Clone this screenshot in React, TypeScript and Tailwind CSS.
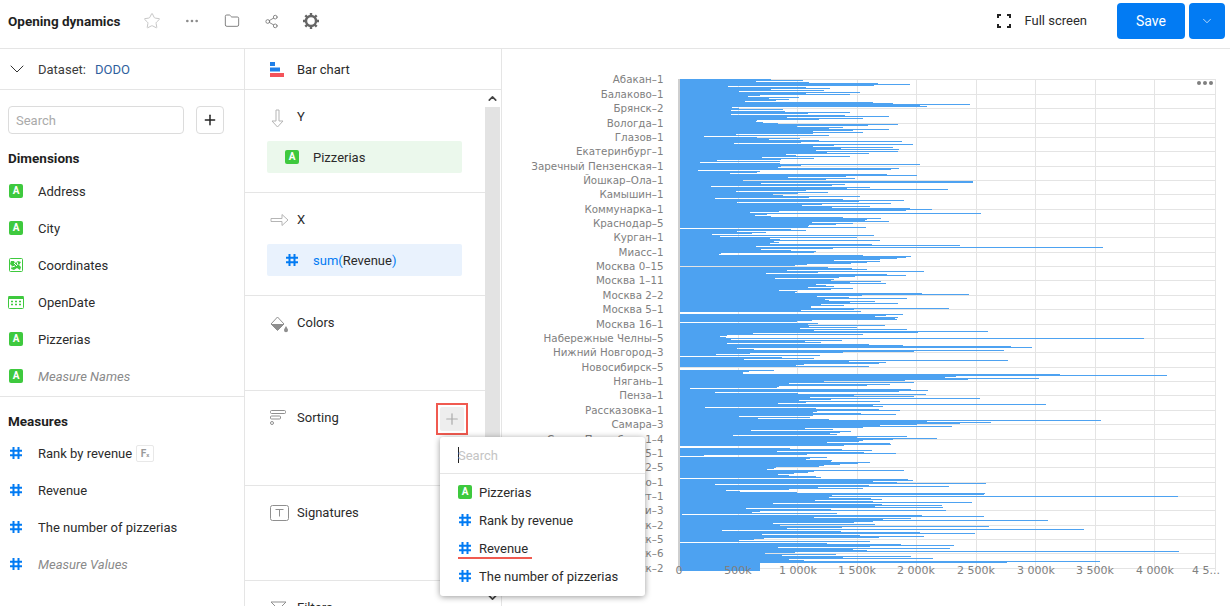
import { ChevronDown, ChevronUp, Ellipsis, Folder, Plus, Share2, Star } from "lucide-react";
import type { ReactNode } from "react";

const font = "font-['Roboto','Liberation_Sans',sans-serif]";

// bar ends read off the reference, one row per pixel
const rowsA = [288,384,243,402,609,705,597,159,393,465,288,447,192,555,393,525,255,219,372,282,342,303,210,594,654,885,735,756,171,192,324,168,330,525,399,168,510,642,336,564,432,246,243,264,309,669,579,366,504,462,642,534,414,564,414,183,462,87,246,375,282,432,681,378,177,714,477,414,654,498,672,423,669,456,582,333,363,525,261,417,318,126,315,75,315,735,378,318,309,672,648,69,255,246,165,636];
const rowsB = [726,513,339,540,453,204,894,894,258,510,471,108,585,516,819,393,183,459,369,294,324,555,402,120,504,687,552,186,648,441,381,585,471,705,771,693,312,225,918,276,240,288,504,618,576,570,642,411,534,483,402,399,573,12,348,393,186,273,231,111,597,135,546,285,315,615,297,312,285,591,855,243,1284,474,258,348,423,417,138,132,564,708,693,666,615,477,615,576,528,396,360,12,459,531,576,336,747,429,273,636];
const rowsC = [693,540,492,300,477,468,618,525,633,423,453,477,399,534,468,312,366,360,741,882,561,426,522,696,450,462,600,525,669,438,507,408,408,822,537,378,558,12,12,684,633,600,669,660,666,411,366,12,429,400,630,402,546,375,696,417,939,729,234,564,156,135,153,1407,168,501,390,438,156,582,684,1008,1071,186,237,987,717,504,225,123,435,12,321,417,207,999,522,633,612,387,363,582,12,12,12,297,222,204,204,1155];
const rowsD = [1476,843,810,1092,879,690,447,717,342,645,576,312,306,45,708,759,672,120,369,753,537,717,405,915,468,372,615,393,309,1113,594,624,90,423,612,675,426,414,558,663,414,192,405,249,462,1278,756,948,855,726,615,831,564,390,474,228,528,495,465,486,174,696,546,786,654,564,552,456,645,648,507,12,12,345,501,591,306,567,663,396,87,12,456,405,393,471,468,585,549,495,447,432,303,297,276,687,417,399,357,309];
const rowsE = [396,468,481,103,712,726,619,683,920,199,609,821,473,593,396,229,266,417,917,913,510,1430,502,614,643,465,618,882,353,643,803,625,805,282,508,813,319,296,524,112,749,913,462,720,646,1084,619,569,353,625,372,928,536,391,1180,218,534,744,890,324,585,755,635,330,303,263,611,103,497,694,834,611,367,824,566,603,1432,412,332,521,377,720,539,779,396,436,1223,975,319,319,319,319,319,319,319,319];

const widths = [
  ...[...rowsA, ...rowsB, ...rowsC, ...rowsD].map((v) => (v - 12) / 3),
  ...rowsE.map((v) => (v - 103) / 2.66),
];

const barPath = widths
  .slice(0, 492)
  .map((w, i) => {
    const px = Math.round(w);
    return `M177 ${30 + i}h${px}v1h-${px}z`;
  })
  .join("");

const cities: [number, string][] = [
  [79, "Абакан–1"], [94, "Балаково–1"], [108, "Брянск–2"], [123, "Вологда–1"], [137, "Глазов–1"],
  [151, "Екатеринбург–1"], [166, "Заречный Пензенская–1"], [180, "Йошкар–Ола–1"], [194, "Камышин–1"],
  [209, "Коммунарка–1"], [223, "Краснодар–5"], [237, "Курган–1"], [252, "Миасс–1"], [266, "Москва 0–15"],
  [280, "Москва 1–11"], [295, "Москва 2–2"], [309, "Москва 5–1"], [324, "Москва 16–1"],
  [338, "Набережные Челны–5"], [352, "Нижний Новгород–3"], [367, "Новосибирск–5"], [381, "Нягань–1"],
  [395, "Пенза–1"], [410, "Рассказовка–1"], [424, "Самара–3"], [439, "Санкт–Петербург 1–4"],
  [453, "Санкт–Петербург 5–1"], [467, "Санкт–Петербург 2–5"], [482, "Сосново–1"], [496, "Сургут–1"],
  [510, "Тольятти–3"], [525, "Хабаровск–2"], [539, "Челябинск–5"], [553, "Южно–Сахалинск–6"], [568, "Якутск–2"],
];

const ticks: [number, string][] = [
  [177, "0"], [236, "500k"], [296, "1 000k"], [355, "1 500k"], [414, "2 000k"],
  [474, "2 500k"], [534, "3 000k"], [593, "3 500k"], [653, "4 000k"],
];

function AttrIcon() {
  return (
    <span className="flex h-[14px] w-[14px] shrink-0 items-center justify-center rounded-[2px] bg-[#3ec93e] text-[10px] font-bold leading-none text-white">
      A
    </span>
  );
}

function HashIcon() {
  return (
    <svg width="14" height="14" viewBox="0 0 14 14" className="shrink-0 text-[#027bf3]" stroke="currentColor" strokeWidth="2">
      <path d="M4.5 1v12M9.5 1v12M1 4.7h12M1 9.3h12" />
    </svg>
  );
}

function GeoIcon() {
  return (
    <svg width="14" height="14" viewBox="0 0 14 14" className="shrink-0 text-[#3ec93e]">
      <rect x="0.5" y="0.5" width="13" height="13" rx="1" fill="none" stroke="currentColor" />
      <path d="M2 3h3l1 2 3-2 3 1-2 3 2 2-1 3-3-2-3 2-3-1 1-3-2-2z" fill="currentColor" />
      <path d="M5 5l3 3M3 9l3-1M8 4l1 3" stroke="#fff" strokeWidth="1" fill="none" />
    </svg>
  );
}

function DateIcon() {
  return (
    <svg width="16" height="14" viewBox="0 0 16 14" className="-ml-px shrink-0 text-[#3ec93e]">
      <rect x="0.5" y="1.5" width="15" height="12" rx="1" fill="none" stroke="currentColor" />
      <rect x="0.5" y="1" width="15" height="3" fill="currentColor" />
      <path d="M3 6.5h2M7 6.5h2M11 6.5h2M3 9.5h2M7 9.5h2M11 9.5h2" stroke="currentColor" strokeWidth="1.4" />
    </svg>
  );
}

function GearIcon() {
  return (
    <svg width="18" height="18" viewBox="0 0 18 18" fill="none" stroke="#666">
      <circle cx="9" cy="9" r="5" strokeWidth="2.4" />
      <path
        d="M9 1v3M9 14v3M1 9h3M14 9h3M3.3 3.3l2.2 2.2M12.5 12.5l2.2 2.2M14.7 3.3l-2.2 2.2M5.5 12.5l-2.2 2.2"
        strokeWidth="2.4"
      />
    </svg>
  );
}

function FieldRow({ icon, label, muted, badge }: { icon: ReactNode; label: string; muted?: boolean; badge?: boolean }) {
  return (
    <div className="flex h-[37px] items-center pl-[9px]">
      <span className="flex w-[29px] items-center">{icon}</span>
      <span className={muted ? "pt-[2px] italic text-[#8a8a8a]" : "pt-[2px] text-[#2b2b2b]"}>{label}</span>
      {badge && (
        <span className="ml-[4px] flex h-[17px] w-[18px] items-center justify-center rounded-[2px] border border-[#e8e8e8] text-[10px] font-bold text-[#999]">
          F<span className="mt-[3px] text-[6px]">x</span>
        </span>
      )}
    </div>
  );
}

function Section({ icon, title, height, children }: { icon: ReactNode; title: string; height: string; children?: ReactNode }) {
  return (
    <div className={`${height} shrink-0 border-b border-[#e5e5e5]`}>
      <div className="mt-[19px] flex h-[16px] items-center pl-[25px]">
        <span className="flex w-[27px] items-center">{icon}</span>
        <span className="text-[#2b2b2b]">{title}</span>
      </div>
      {children}
    </div>
  );
}

function DashboardChart() {
  return (
    <svg width="728" height="557" viewBox="0 0 728 557" className="block">
      <g stroke="#e4e4e4" strokeWidth="1" shapeRendering="crispEdges">
        {cities.map(([y]) => (
          <path key={y} d={`M177 ${y - 49 + 0.5}H713`} />
        ))}
        {[236, 295, 355, 414, 474, 533, 593, 652, 713].map((x) => (
          <path key={x} d={`M${x + 0.5} 30V522`} />
        ))}
      </g>
      <path d={barPath} fill="#4da2f1" shapeRendering="crispEdges" />
      <path d="M177 30V522" stroke="#cfcfcf" strokeWidth="2" shapeRendering="crispEdges" />
      <g fill="#808080" className="font-['DejaVu_Sans',sans-serif]">
        {cities.map(([y, name]) => (
          <text key={y} x="161.5" y={y - 49 + 4} textAnchor="end" className="text-[10.3px]">
            {name}
          </text>
        ))}
        {ticks.map(([x, t]) => (
          <text key={t} x={x} y="525" textAnchor="middle" className="text-[11px]">
            {t}
          </text>
        ))}
        <text x="690" y="525" className="text-[11px]">4 5...</text>
      </g>
      <g fill="#7f7f7f">
        <circle cx="697" cy="34" r="2" />
        <circle cx="703" cy="34" r="2" />
        <circle cx="709" cy="34" r="2" />
      </g>
    </svg>
  );
}

export default function App() {
  return (
    <div className={`${font} relative h-[606px] w-[1230px] overflow-hidden bg-white text-[13px] text-[#2b2b2b]`}>
      {/* Header */}
      <header className="flex h-[49px] items-center border-b border-[#e5e5e5] pb-[6px] pl-2">
        <span className="w-[135px] text-[13.5px] font-bold text-[#1f1f1f]">Opening dynamics</span>
        <Star className="h-[18px] w-[18px] text-[#c4c4c4]" strokeWidth={1.3} />
        <Ellipsis className="ml-[23px] h-[16px] w-[16px] text-[#8c8c8c]" />
        <Folder className="ml-[24px] h-[16px] w-[16px] text-[#7a7a7a]" strokeWidth={1.4} />
        <Share2 className="ml-[24px] h-[15px] w-[15px] text-[#7a7a7a]" strokeWidth={1.4} />
        <span className="ml-[23px]"><GearIcon /></span>
        <div className="ml-auto flex items-center">
          <svg width="14" height="14" viewBox="0 0 14 14" fill="none" stroke="#222" strokeWidth="2" className="mr-[13px]">
            <path d="M1 4V1h3M10 1h3v3M13 10v3h-3M4 13H1v-3" />
          </svg>
          <span className="mr-[30px] text-[#2b2b2b]">Full screen</span>
          <button className="h-[36px] w-[68px] rounded-[4px] bg-[#027bf3] text-[14px] text-white">Save</button>
          <button className="ml-[4px] mr-[5px] flex h-[36px] w-[36px] items-center justify-center rounded-[4px] bg-[#027bf3] text-white">
            <ChevronDown className="h-[14px] w-[14px]" strokeWidth={1.2} />
          </button>
        </div>
      </header>

      <div className="flex h-[557px]">
        {/* Dataset panel */}
        <aside className="w-[245px] shrink-0 border-r border-[#e5e5e5]">
          <div className="flex h-[41px] items-center border-b border-[#e5e5e5] pl-[5px]">
            <ChevronDown className="h-[24px] w-[24px] text-[#333]" strokeWidth={1} />
            <span className="ml-[9px] pt-[2px] text-[#3b3b3b]">Dataset:</span>
            <span className="ml-[9px] pt-[2px] text-[#2f5f9e]">DODO</span>
          </div>
          <div className="mt-[16px] flex gap-[12px] pl-2">
            <div className="flex h-[28px] w-[176px] items-center rounded-[4px] border border-[#dcdcdc] pl-[7px] pt-[2px] text-[#aaa]">Search</div>
            <div className="flex h-[28px] w-[28px] items-center justify-center rounded-[4px] border border-[#dcdcdc]">
              <Plus className="h-[16px] w-[16px] text-[#222]" strokeWidth={2.2} />
            </div>
          </div>
          <div className="mt-[16px] h-[16px] pl-2 text-[13.5px] font-bold leading-[16px] text-[#1f1f1f]">Dimensions</div>
          <div className="mt-[6.5px] border-b border-[#e5e5e5] pb-[1.5px]">
            <FieldRow icon={<AttrIcon />} label="Address" />
            <FieldRow icon={<AttrIcon />} label="City" />
            <FieldRow icon={<GeoIcon />} label="Coordinates" />
            <FieldRow icon={<DateIcon />} label="OpenDate" />
            <FieldRow icon={<AttrIcon />} label="Pizzerias" />
            <FieldRow icon={<AttrIcon />} label="Measure Names" muted />
          </div>
          <div className="mt-[16px] h-[16px] pl-2 text-[13.5px] font-bold leading-[16px] text-[#1f1f1f]">Measures</div>
          <div className="mt-[5.5px]">
            <FieldRow icon={<HashIcon />} label="Rank by revenue" badge />
            <FieldRow icon={<HashIcon />} label="Revenue" />
            <FieldRow icon={<HashIcon />} label="The number of pizzerias" />
            <FieldRow icon={<HashIcon />} label="Measure Values" muted />
          </div>
        </aside>

        {/* Wizard panel */}
        <section className="w-[257px] shrink-0 border-r border-[#e5e5e5]">
          <div className="flex h-[41px] items-center border-b border-[#e5e5e5] pl-[25px]">
            <svg width="14" height="15" viewBox="0 0 14 15" className="mr-[13px]">
              <rect x="0" y="0" width="5" height="4" fill="#1f7fe8" />
              <rect x="0" y="5.5" width="10" height="4" fill="#1f7fe8" />
              <rect x="0" y="11" width="14" height="4" fill="#f4535a" />
            </svg>
            <span className="pt-[2px]">Bar chart</span>
          </div>
          <div className="flex">
            <div className="flex h-[516px] w-[240px] shrink-0 flex-col overflow-hidden">
              <Section
                title="Y"
                height="h-[103px]"
                icon={
                  <svg width="16" height="19" viewBox="0 0 16 19" fill="none" stroke="#b5b5b5" className="mt-[3px]">
                    <path d="M6 1h3v11h4l-5.5 6L2 12h4z" />
                  </svg>
                }
              >
                <div className="ml-[22px] mt-[16px] flex h-[32px] w-[195px] items-center rounded-[2px] bg-[#ebf8ec] pl-[18px]">
                  <span className="w-[28px]"><AttrIcon /></span>
                  <span className="pt-[2px]">Pizzerias</span>
                </div>
              </Section>
              <Section
                title="X"
                height="h-[103px]"
                icon={
                  <svg width="19" height="16" viewBox="0 0 19 16" fill="none" stroke="#b5b5b5">
                    <path d="M1 6.5h11v-4l6 5.5-6 5.5v-4H1z" />
                  </svg>
                }
              >
                <div className="ml-[22px] mt-[16px] flex h-[32px] w-[195px] items-center rounded-[2px] bg-[#e9f2fd] pl-[18px]">
                  <span className="w-[28px]"><HashIcon /></span>
                  <span className="pt-[2px]">
                    <span className="text-[#027bf3]">sum(</span>Revenue<span className="text-[#027bf3]">)</span>
                  </span>
                </div>
              </Section>
              <Section
                title="Colors"
                height="h-[95px]"
                icon={
                  <svg width="19" height="17" viewBox="0 0 19 17" className="mt-[3px]">
                    <path d="M7.5 1l6.5 7-6.5 6.5L1 8z" fill="#fff" stroke="#8f8f8f" />
                    <path d="M1 8h13l-6.5 6.5z" fill="#8f8f8f" />
                    <path d="M16 10c1 2 2 3 2 4.300a2 2 0 0 1-4 0c0-1.300 1-2.300 2-4.300z" fill="#8f8f8f" />
                  </svg>
                }
              />
              <Section
                title="Sorting"
                height="h-[95px]"
                icon={
                  <svg width="17" height="16" viewBox="0 0 17 16" fill="none" stroke="#8f8f8f">
                    <rect x="0.5" y="0.5" width="15" height="3" rx="1" />
                    <rect x="0.5" y="6" width="10" height="3" rx="1" />
                    <rect x="0.5" y="11.5" width="3" height="3" rx="1.5" />
                  </svg>
                }
              />
              <Section
                title="Signatures"
                height="h-[95px]"
                icon={
                  <svg width="19" height="16" viewBox="0 0 19 16" fill="none" stroke="#8f8f8f">
                    <rect x="0.5" y="0.5" width="18" height="15" rx="2" />
                    <path d="M5.5 4.500h8M9.500 4.500v7" />
                  </svg>
                }
              />
              <Section
                title="Filters"
                height="h-[95px]"
                icon={
                  <svg width="17" height="14" viewBox="0 0 17 14" fill="none" stroke="#8f8f8f">
                    <path d="M1 1h15l-6 6v6l-3-2V7z" />
                  </svg>
                }
              />
            </div>
            <div className="flex w-[15px] flex-col items-center">
              <ChevronUp className="mt-[2px] h-[13px] w-[13px] text-[#444]" strokeWidth={3} />
              <div className="mt-[2px] h-[483px] w-[15px] bg-[#e3e3e3]" />
              <ChevronDown className="mt-[1px] h-[13px] w-[13px] text-[#444]" strokeWidth={3} />
            </div>
          </div>
        </section>

        {/* Chart */}
        <main className="min-w-0 flex-1">
          <DashboardChart />
        </main>
      </div>

      {/* Highlighted add button */}
      <div className="absolute left-[436px] top-[403px] flex h-[32px] w-[32px] items-center justify-center border-2 border-[#f05a50]">
        <div className="flex h-[24px] w-[24px] items-center justify-center rounded-[2px] bg-[#eeeeee]">
          <Plus className="h-[18px] w-[18px] text-[#ababab]" strokeWidth={1.6} />
        </div>
      </div>

      {/* Field dropdown */}
      <div className="absolute left-[440px] top-[437px] h-[159px] w-[205px] rounded-[3px] bg-white shadow-[0_1px_6px_rgba(0,0,0,0.4)]">
        <div className="flex h-[37px] items-center border-b border-[#e5e5e5] pl-[18px] text-[#c4c4c4]">
          <span className="mr-[-1px] h-[16px] w-px bg-[#222]" />
          <span className="pt-[1px]">Search</span>
        </div>
        <div className="pt-[4px]">
          {[
            { label: "Pizzerias", icon: <AttrIcon /> },
            { label: "Rank by revenue", icon: <HashIcon /> },
            { label: "Revenue", icon: <HashIcon /> },
            { label: "The number of pizzerias", icon: <HashIcon /> },
          ].map((item) => (
            <div key={item.label} className="flex h-[28px] items-center pl-[18px]">
              <span className="w-[21px]">{item.icon}</span>
              <span className="pt-[2px]">{item.label}</span>
            </div>
          ))}
        </div>
        <div className="absolute left-[18px] top-[120px] h-[2px] w-[74px] bg-[#f05a50]" />
      </div>
    </div>
  );
}
